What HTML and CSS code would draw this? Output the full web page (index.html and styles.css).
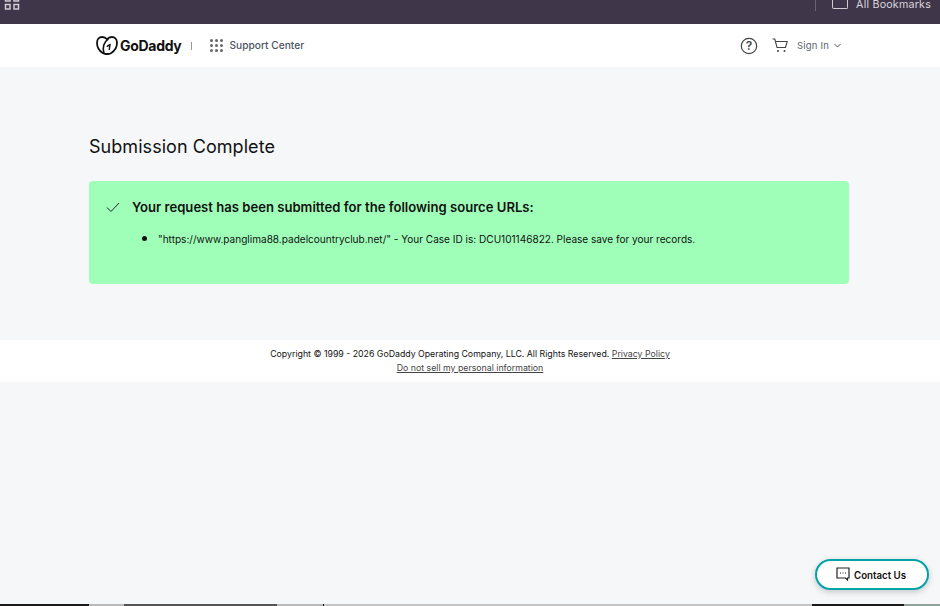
FILE: index.html
```html
<!DOCTYPE html>
<html lang="en">
<head>
<meta charset="utf-8">
<title>Submission Complete</title>
<link rel="stylesheet" href="styles.css">
</head>
<body>
<div class="chrome">
  <svg class="apps" width="16" height="10" viewBox="0 0 16 10"><g fill="none" stroke="#cfcbd3" stroke-width="1.500"><rect x="1.500" y="-3.500" width="4.500" height="4.500"/><rect x="10" y="-3.500" width="4.500" height="4.500"/><rect x="1.500" y="4.500" width="4.500" height="4.500"/><rect x="10" y="4.500" width="4.500" height="4.500"/></g></svg>
  <div class="bookmarks"><span class="divider"></span><span class="folder"></span><span class="bm-text">All Bookmarks</span></div>
</div>
<header class="header">
  <div class="brand">
    <svg class="logo" width="22" height="19" viewBox="0 0 22 19"><path d="M6.200 1C3 1 1 3.500 1 7c0 4.200 2.700 8 5.700 10 1 .7 2 1 3 1h2.600c1 0 2-.3 3-1 3-2 5.700-5.800 5.700-10 0-3.500-2-6-5.200-6-2 0-3.600.8-4.800 2.300C9.800 1.800 8.200 1 6.200 1z" fill="none" stroke="#111" stroke-width="1.800"/><path d="M8 17.200C6 11.500 8 5.800 12.400 2.800" fill="none" stroke="#111" stroke-width="1.600"/><path d="M10.800 10.800c.9-.9 2-1.700 3.200-2l-.8 5" fill="none" stroke="#111" stroke-width="1.400"/></svg>
    <span class="wordmark">GoDaddy</span>
    <span class="sep"></span>
    <span class="dots"><i></i><i></i><i></i><i></i><i></i><i></i><i></i><i></i><i></i></span>
    <span class="support">Support Center</span>
  </div>
  <div class="tools">
    <svg width="18" height="18" viewBox="0 0 18 18"><circle cx="9" cy="9" r="7.700" fill="none" stroke="#444" stroke-width="1.200"/><text x="9" y="13" text-anchor="middle" class="q">?</text></svg>
    <svg class="cart" width="17" height="16" viewBox="0 0 17 16"><path d="M.5 1h2.300l2.200 8.500h8.500l1.700-6H4" fill="none" stroke="#444" stroke-width="1.100"/><circle cx="6" cy="13" r="1" fill="#444"/><circle cx="12.500" cy="13" r="1" fill="#444"/></svg>
    <span class="signin">Sign In</span>
    <svg width="7" height="5" viewBox="0 0 7 5"><path d="M.5 1l3 3 3-3" fill="none" stroke="#555"/></svg>
  </div>
</header>
<main class="main">
  <h1 class="title">Submission Complete</h1>
  <section class="alert">
    <div class="alert-head">
      <svg width="14" height="11" viewBox="0 0 14 11"><path d="M1 5.500l4 4 8-8.500" fill="none" stroke="#222" stroke-width="1"/></svg>
      <h2 class="alert-title">Your request has been submitted for the following source URLs:</h2>
    </div>
    <ul class="alert-list">
      <li>"https://www.panglima88.padelcountryclub.net/" - Your Case ID is: DCU101146822. Please save for your records.</li>
    </ul>
  </section>
</main>
<footer class="footer">
  <p>Copyright © 1999 - 2026 GoDaddy Operating Company, LLC. All Rights Reserved. <a href="#">Privacy Policy</a></p>
  <p><a href="#">Do not sell my personal information</a></p>
</footer>
<button class="contact"><svg width="14" height="14" viewBox="0 0 14 14"><path d="M1 1h12v10h-1.500v2l-2-2H1z" fill="none" stroke="#222" stroke-width="1.200"/><path d="M4 6h1M6.500 6h1M9 6h1" stroke="#222"/></svg><span>Contact Us</span></button>
<div class="bottom-strip"><span class="strip-dark"></span><span class="strip-mid"><span class="strip-bit"></span></span><span class="strip-light"></span><span class="strip-end"></span><span class="strip-tail"></span></div>
</body>
</html>
```
FILE: styles.css
```css
* { box-sizing: border-box; }
html, body { margin: 0; height: 100%; }
body { height: 606px; overflow: hidden; background: #f5f7f8; font-family: Inter, "Liberation Sans", sans-serif; color: #111; position: relative; display: flex; flex-direction: column; }
.chrome { height: 24px; background: #40364a; display: flex; justify-content: space-between; flex: none; overflow: hidden; position: relative; }
.apps { margin: 0 0 0 4px; }
.bookmarks { display: flex; align-items: flex-start; margin-right: 9px; }
.divider { width: 1px; height: 11px; background: #6b6273; margin-right: 16px; }
.folder { width: 16px; height: 9px; border: 1.500px solid #cfcbd3; border-top: none; border-radius: 0 0 2px 2px; margin-right: 8px; }
.bm-text { font-size: 10.700px; line-height: 9px; color: #d8d4dc; letter-spacing: .2px; }
.header { height: 43px; background: #fff; flex: none; display: flex; justify-content: space-between; align-items: center; padding: 0 99px 0 96px; }
.brand, .tools { display: flex; align-items: center; }
.wordmark { font-size: 14px; font-weight: 700; margin-left: 2px; letter-spacing: -.3px; color: #111; }
.sep { width: 1px; height: 8px; background: #999; margin: 0 18px 0 10px; }
.dots { display: grid; grid-template-columns: repeat(3, 3px); gap: 2px; margin-right: 6px; }
.dots i { width: 3px; height: 3px; border-radius: 50%; background: #666; }
.support { font-size: 10.200px; color: #4b5563; font-weight: 500; padding-bottom: 1px; }
.tools { gap: 0; }
.tools .cart { margin: 0 8px 0 14px; }
.q { font: 600 12px Inter, sans-serif; fill: #444; }
.signin { font-size: 9.500px; color: #5b6470; margin-right: 5px; letter-spacing: .2px; }
.main { flex: none; height: 273px; padding: 69px 91px 0 89px; }
.title { margin: 0 0 23px; font-size: 18px; line-height: 22px; font-weight: 400; color: #111; letter-spacing: .05px; }
.alert { height: 103px; background: #9fffb9; border-radius: 4px; padding: 17px 17px; }
.alert-head { display: flex; align-items: center; gap: 12px; }
.alert-title { margin: 0; font-size: 13.100px; line-height: 18px; font-weight: 600; color: #111; }
.alert-list { margin: 15px 0 0; padding-left: 52px; font-size: 10.050px; line-height: 14px; color: #111; }
.alert-list li::marker { font-size: 14px; }
.footer { height: 42px; background: #fff; flex: none; text-align: center; padding-top: 7px; font-size: 8.780px; line-height: 14px; color: #111; }
.footer p { margin: 0; }
.footer a { color: #444; text-decoration: underline; }
.contact { position: absolute; left: 815px; top: 559px; width: 114px; height: 31px; border: 2px solid #00a4a6; border-radius: 16px; background: #fff; font: 600 9.700px Inter, sans-serif; color: #111; display: flex; align-items: center; justify-content: center; gap: 4px; box-shadow: 0 2px 6px rgba(0,0,0,.2); padding: 0 2px 0 0; }
.contact span { padding-top: 2px; }
.contact svg { margin-bottom: 1px; }
.bottom-strip { position: absolute; left: 0; right: 0; bottom: 0; height: 2px; display: flex; }
.strip-dark { width: 89px; background: #1a1a1a; }
.strip-mid { width: 235px; background: #bbb; border-right: 1px solid #111; padding-left: 35px; }
.strip-bit { display: block; width: 153px; height: 2px; background: #555; }
.strip-light { width: 488px; background: #c4c4c4; }
.strip-end { width: 92px; background: #1a1a1a; }
.strip-tail { flex: 1; background: #8fa39a; }
```
